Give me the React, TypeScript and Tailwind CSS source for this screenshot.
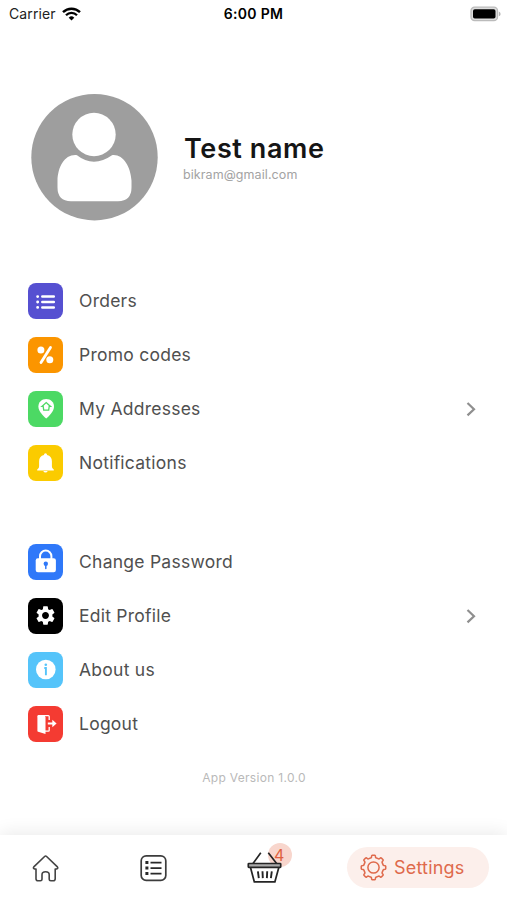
import React from "react";
import { MdSettings } from "react-icons/md";

type rowProps = {
  label: string;
  color: string;
  arrow?: boolean;
  children: React.ReactNode;
};

// Outline of a cog centred on 13,13
const cog = (teeth: number, outer: number, inner: number) => {
  const step = (Math.PI * 2) / teeth;
  const points: string[] = [];
  for (let i = 0; i < teeth; i++) {
    const mid = i * step - Math.PI / 2;
    [
      [-0.31, inner],
      [-0.24, inner + 0.6],
      [-0.2, outer - 0.4],
      [-0.14, outer],
      [0.14, outer],
      [0.2, outer - 0.4],
      [0.24, inner + 0.6],
      [0.31, inner],
    ].forEach(([offset, r]) => {
      const a = mid + offset * step;
      points.push(
        `${(13 + r * Math.cos(a)).toFixed(2)} ${(13 + r * Math.sin(a)).toFixed(2)}`
      );
    });
  }
  return `M${points.join("L")}Z`;
};

const Row = ({ label, color, arrow, children }: rowProps) => {
  return (
    <li className="flex h-[54px] items-center">
      <div
        className={`flex h-9 w-[35px] items-center justify-center rounded-[8px] ${color}`}
      >
        {children}
      </div>
      <span className="ml-4 text-[17.5px] tracking-[0.25px] text-[#505050]">
        {label}
      </span>
      {arrow && (
        <svg
          className="ml-auto"
          width="12"
          height="18"
          fill="none"
          stroke="#8f8f8f"
          strokeWidth="2.2"
        >
          <path d="M2.5 3l6.5 6.2-6.5 6.2" />
        </svg>
      )}
    </li>
  );
};

const StatusBar = () => {
  return (
    <div className="grid h-[27px] grid-cols-3 items-center pl-[9px] pr-[6px] text-[14px] text-[#222]">
      <div className="flex items-center gap-[6px]">
        <span className="tracking-[0.1px]">Carrier</span>
        <svg width="19" height="14" viewBox="0 0 19 14" fill="none" stroke="#000">
          <path d="M1 5.2a12.2 12.2 0 0 1 17 0" strokeWidth="2.4" />
          <path d="M4 8.2a7.8 7.8 0 0 1 11 0" strokeWidth="2.3" />
          <path d="M9.5 13.5L6.7 10.7a4 4 0 0 1 5.6 0z" fill="#000" stroke="none" />
        </svg>
      </div>
      <span className="pr-[3px] text-center text-[14px] font-semibold tracking-[0.3px] text-black">
        6:00 PM
      </span>
      <svg className="ml-auto" width="31" height="16" viewBox="0 0 31 16">
        <rect x="1" y="1.2" width="26.5" height="13.4" rx="3.6" fill="#ddd" stroke="#bbb" strokeWidth="1.3" />
        <rect x="3" y="3.3" width="22.5" height="9.2" rx="1.8" fill="#000" />
        <path d="M28.8 5.6q1.8.6 1.8 2.3t-1.8 2.3z" fill="#b5b5b5" />
      </svg>
    </div>
  );
};

const TabBar = () => {
  return (
    <nav className="flex h-[65px] items-center bg-white pl-8 pr-[18px] shadow-[0_-3px_16px_rgba(0,0,0,0.08)]">
      <svg width="27" height="28" viewBox="0 0 27 28" fill="none" stroke="#444" strokeWidth="1.6" strokeLinejoin="round">
        <path d="M12.6 2.500q1-1 2 0l10.800 10.400q1.100 1.500-.9 2.100h-1.300v9.800q0 2-2 2h-2.400q-1.600 0-1.600-1.600v-4.500q0-2.900-3.600-2.900t-3.600 2.900v4.500q0 1.600-1.600 1.600H6q-2 0-2-2V15H2.700q-2-.6-.9-2.100z" />
      </svg>
      <svg className="ml-[81px]" width="27" height="28" viewBox="0 0 27 28" fill="none" stroke="#292929">
        <rect x="1.2" y="1.8" width="24.6" height="24.6" rx="5" stroke="#3c3c3c" strokeWidth="1.7" />
        <path d="M10.500 8.600h11M10.500 14.100h11M10.500 19.600h11" strokeWidth="1.7" />
        <path d="M5.400 8.600h3M5.400 14.100h3M5.400 19.600h3" strokeWidth="3" />
      </svg>
      <div className="relative ml-[80px] h-[40px] w-[46px]">
        <div className="absolute left-[21px] top-[-5px] h-6 w-6 rounded-full bg-[#f8d6cd]" />
        <svg className="absolute left-0 top-0" width="46" height="40" viewBox="0 0 46 40" fill="none" stroke="#252525" strokeWidth="1.7">
          <path d="M13.800 4.800L6 15.500M21.300 4.800L29.600 15.500" />
          <rect x="1.300" y="15.500" width="32.400" height="3.800" rx=".6" fill="#aaa" />
          <path d="M3.500 19.500l3.800 14.300h20.600l3.900-14.300" />
          <path d="M10.900 23.300l.9 6.800M15.500 23.300l.3 6.800M20.200 23.300l-.3 6.800M24.800 23.300l-.9 6.800" strokeWidth="1.9" />
        </svg>
        <span className="absolute left-[27px] top-[-4px] text-[16px] leading-[22px] text-[#df6040]">
          4
        </span>
      </div>
      <div className="ml-auto flex h-[41px] w-[142px] items-center rounded-full bg-[#fcefeb] pl-[13px]">
        <svg width="27" height="27" viewBox="-0.5 -0.5 27 27" fill="none" stroke="#df6a4c" strokeWidth="1.5" strokeLinejoin="round">
          <path d={cog(8, 12.3, 10)} />
          <circle cx="13" cy="13" r="5.6" />
        </svg>
        <span className="ml-[7px] text-[18px] tracking-[0.2px] text-[#df6a4c]">
          Settings
        </span>
      </div>
    </nav>
  );
};

const App = () => {
  return (
    <div className="flex h-[900px] w-[507px] flex-col overflow-hidden bg-white font-['Inter','Liberation_Sans',sans-serif]">
      <StatusBar />
      <header className="mt-[67px] flex items-center pl-[31px]">
        <svg width="127" height="127" viewBox="0 0 127 127">
          <circle cx="63.500" cy="63.200" r="63.200" fill="#9e9e9e" />
          <circle cx="63" cy="40.500" r="21.700" fill="#fff" />
          <path
            d="M46 61.700Q54 68 63 68.200Q72 68 81 61.700C92 60.300 99.600 73 100.500 87V94Q100.500 107.500 87 107.700H40Q26.500 107.500 26.500 94V87C27 73 34 60.300 46 61.700Z"
            transform="translate(0 -0.5)"
            fill="#fff"
          />
        </svg>
        <div className="ml-[26px]">
          <h1 className="text-[27px] font-semibold leading-[34px] tracking-[0.6px] text-[#151515]">
            Test name
          </h1>
          <p className="-ml-px text-[12.5px] leading-[18px] tracking-[0.08px] text-[#a3a3a3]">
            bikram@gmail.com
          </p>
        </div>
      </header>

      <ul className="mt-[53px] pl-7 pr-[30px]">
        <Row label="Orders" color="bg-[#5650d1]">
          <svg width="35" height="36" fill="none" stroke="#fff" strokeWidth="2.5" strokeLinecap="round">
            <path d="M14.300 13.600h11.500M14.300 19h11.500M14.300 24.400h11.500" />
            <path d="M9.600 13.600h.1M9.600 19h.1M9.600 24.400h.1" strokeWidth="2.800" />
          </svg>
        </Row>
        <Row label="Promo codes" color="bg-[#fb9500]">
          <svg width="35" height="36" fill="#fff">
            <path d="M22.500 10.500L13 25.500" stroke="#fff" strokeWidth="2.800" strokeLinecap="round" />
            <circle cx="12.900" cy="13" r="3.500" />
            <circle cx="21.800" cy="22.700" r="3.500" />
          </svg>
        </Row>
        <Row label="My Addresses" color="bg-[#4cd964]" arrow>
          <svg width="35" height="36" fill="#fff">
            <path d="M18.200 8c-4.600 0-7.800 3.300-7.800 7.500 0 4.500 3.700 8.200 7.800 12.100 4.100-3.900 7.800-7.600 7.800-12.100C26 11.300 22.800 8 18.200 8z" />
            <path d="M13.900 15.400l4.300-3.800 4.300 3.800h-1.300l-.5 3.700h-5l-.5-3.700z" fill="none" stroke="#4cd964" strokeWidth="1.300" />
          </svg>
        </Row>
        <Row label="Notifications" color="bg-[#fbcb00]">
          <svg width="35" height="36" fill="#fff">
            <path d="M17.500 8.200a1.500 1.500 0 0 1 1.500 1.500v.3c3.300.7 4.900 3 4.900 6.200v4.900c0 1.800.6 2.500 1.900 3.300v1H9.200v-1c1.300-.8 1.900-1.500 1.900-3.300v-4.900c0-3.200 1.600-5.500 4.900-6.200v-.3a1.500 1.500 0 0 1 1.500-1.500zM15.300 26h4.400q-.6 1.600-2.200 1.600T15.300 26z" />
          </svg>
        </Row>
      </ul>

      <ul className="mt-[45px] pl-7 pr-[30px]">
        <Row label="Change Password" color="bg-[#2f78f9]">
          <svg width="35" height="36" fill="#fff">
            <path d="M12 15v-2.700a5.700 5.700 0 0 1 11.400 0V15" fill="none" stroke="#fff" strokeWidth="2" />
            <rect x="7.700" y="14.300" width="20.200" height="13.900" rx="2.200" />
            <circle cx="17.800" cy="19.700" r="2.200" fill="#2f78f9" />
            <path d="M17.800 20v4.500" stroke="#2f78f9" strokeWidth="1.500" strokeLinecap="round" />
          </svg>
        </Row>
        <Row label="Edit Profile" color="bg-black" arrow>
          <MdSettings size={23} color="#fff" className="mb-px" />
        </Row>
        <Row label="About us" color="bg-[#55c4fa]">
          <svg width="35" height="36">
            <circle cx="17.800" cy="17.500" r="9.800" fill="#fff" />
            <circle cx="17.800" cy="12.800" r="1.300" fill="#55c4fa" />
            <path d="M16.300 16h1.600v7.300" fill="none" stroke="#55c4fa" strokeWidth="1.900" />
          </svg>
        </Row>
        <Row label="Logout" color="bg-[#f43b32]">
          <svg width="35" height="36" fill="#fff">
            <path d="M10.500 9h4.500q2.500.4 2.500 2.400V28l-7.300-2.200q-.8-.3-.8-1.100V10.300Q9.400 9 10.500 9z" />
            <path d="M11 9.600h9.300q.9 0 .9.900V14M21.200 21v3.200q0 .9-.9.900H17" fill="none" stroke="#fff" strokeWidth="1.300" />
            <path d="M19.800 17.500h5.200" stroke="#fff" strokeWidth="2" />
            <path d="M24.300 13.800l4.300 3.700-4.300 3.700z" />
          </svg>
        </Row>
      </ul>

      <p className="mt-[18px] pl-px text-center text-[12px] leading-[18px] tracking-[0.3px] text-[#b9b9b9]">
        App Version 1.0.0
      </p>
      <div className="mt-auto">
        <TabBar />
      </div>
    </div>
  );
};

export default App;
